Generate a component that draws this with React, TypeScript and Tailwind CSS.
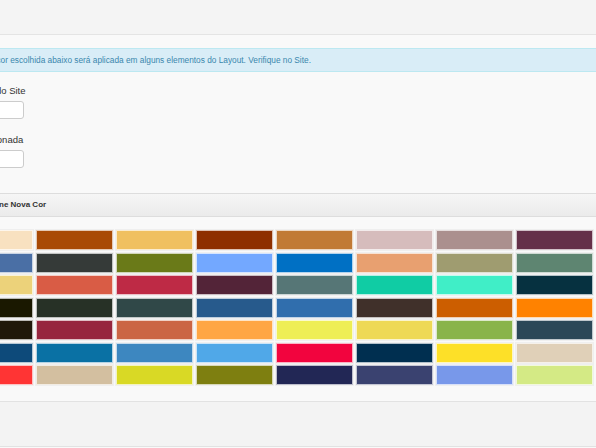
const swatches: string[][] = [
  ["#f8e1c0", "#a94a05", "#f0c060", "#8e2f00", "#c17a35", "#d6bcbc", "#ab908e", "#643049"],
  ["#4a6fa5", "#353a38", "#6a7a18", "#73a8ff", "#0070c4", "#e8a070", "#9f9c70", "#5e8571"],
  ["#ecd27a", "#d95c45", "#be2a45", "#532438", "#567676", "#10cca4", "#40eec7", "#063140"],
  ["#1a1800", "#273126", "#304848", "#275a8c", "#306ead", "#40302a", "#cc5e00", "#ff8200"],
  ["#20180a", "#97253e", "#cb6545", "#ffa645", "#eeee55", "#eed955", "#89b44a", "#2b4858"],
  ["#0d4a7a", "#0a71a4", "#3d87c0", "#50a8e8", "#f2043e", "#002f50", "#fde028", "#e0d0b8"],
  ["#ff3434", "#d3bfa0", "#d9d925", "#7e7f10", "#222755", "#3a4270", "#7898ea", "#d4ea85"],
];

const App = () => {
  return (
    <div
      className="w-[596px] h-[448px] overflow-hidden bg-[#f9f9f9] text-[#333]"
      style={{ fontFamily: '"Liberation Sans", Arial, sans-serif' }}
    >
      <div className="h-[35px] bg-[#f4f4f4] border-b border-[#e4e4e4]" />

      <div className="pt-[13px]">
        <div className="h-[24px] -ml-[20px] w-[640px] flex items-center pl-[8px] bg-[#d9edf7] border border-[#bce8f1] text-[#3a87ad] text-[8.3px]">
          A cor escolhida abaixo será aplicada em alguns elementos do Layout. Verifique no Site.
        </div>

        <div className="mt-[13px] flex flex-col">
          <label className="-ml-[22px] text-[9.5px] leading-[12px] text-[#333]">Cor do Site</label>
          <input
            type="text"
            className="mt-[4px] -ml-[37px] w-[61px] h-[18px] bg-white border border-[#cccccc] rounded-[3px]"
          />
        </div>

        <div className="mt-[15px] flex flex-col">
          <label className="-ml-[47px] text-[9.5px] leading-[12px] text-[#333]">Cor Selecionada</label>
          <input
            type="text"
            className="mt-[4px] -ml-[37px] w-[61px] h-[18px] bg-white border border-[#cccccc] rounded-[3px]"
          />
        </div>

        <div className="mt-[25px] -ml-[60px] w-[700px] border-b border-[#e2e2e2]">
          <div className="h-[24px] flex items-center bg-gradient-to-b from-[#f6f6f6] to-[#ebebeb] border-y border-[#dddddd] pl-[31px]">
            <span className="text-[8px] font-bold text-[#333]">Selecione Nova Cor</span>
          </div>
          <div className="pt-[13px] pb-[16px] pl-[16px]">
            <div className="grid grid-cols-[repeat(8,77px)] gap-x-[3px] gap-y-[2.5px]">
              {swatches.flat().map((c, i) => (
                <div
                  key={i}
                  className="h-[20px] border border-white/70 shadow-[0_0_0_1px_rgba(0,0,0,0.04)]"
                  style={{ backgroundColor: c }}
                />
              ))}
            </div>
          </div>
        </div>

        <div className="h-[45px] bg-[#f3f3f3] border-b border-[#e2e2e2]" />
      </div>
    </div>
  );
};

export default App;
